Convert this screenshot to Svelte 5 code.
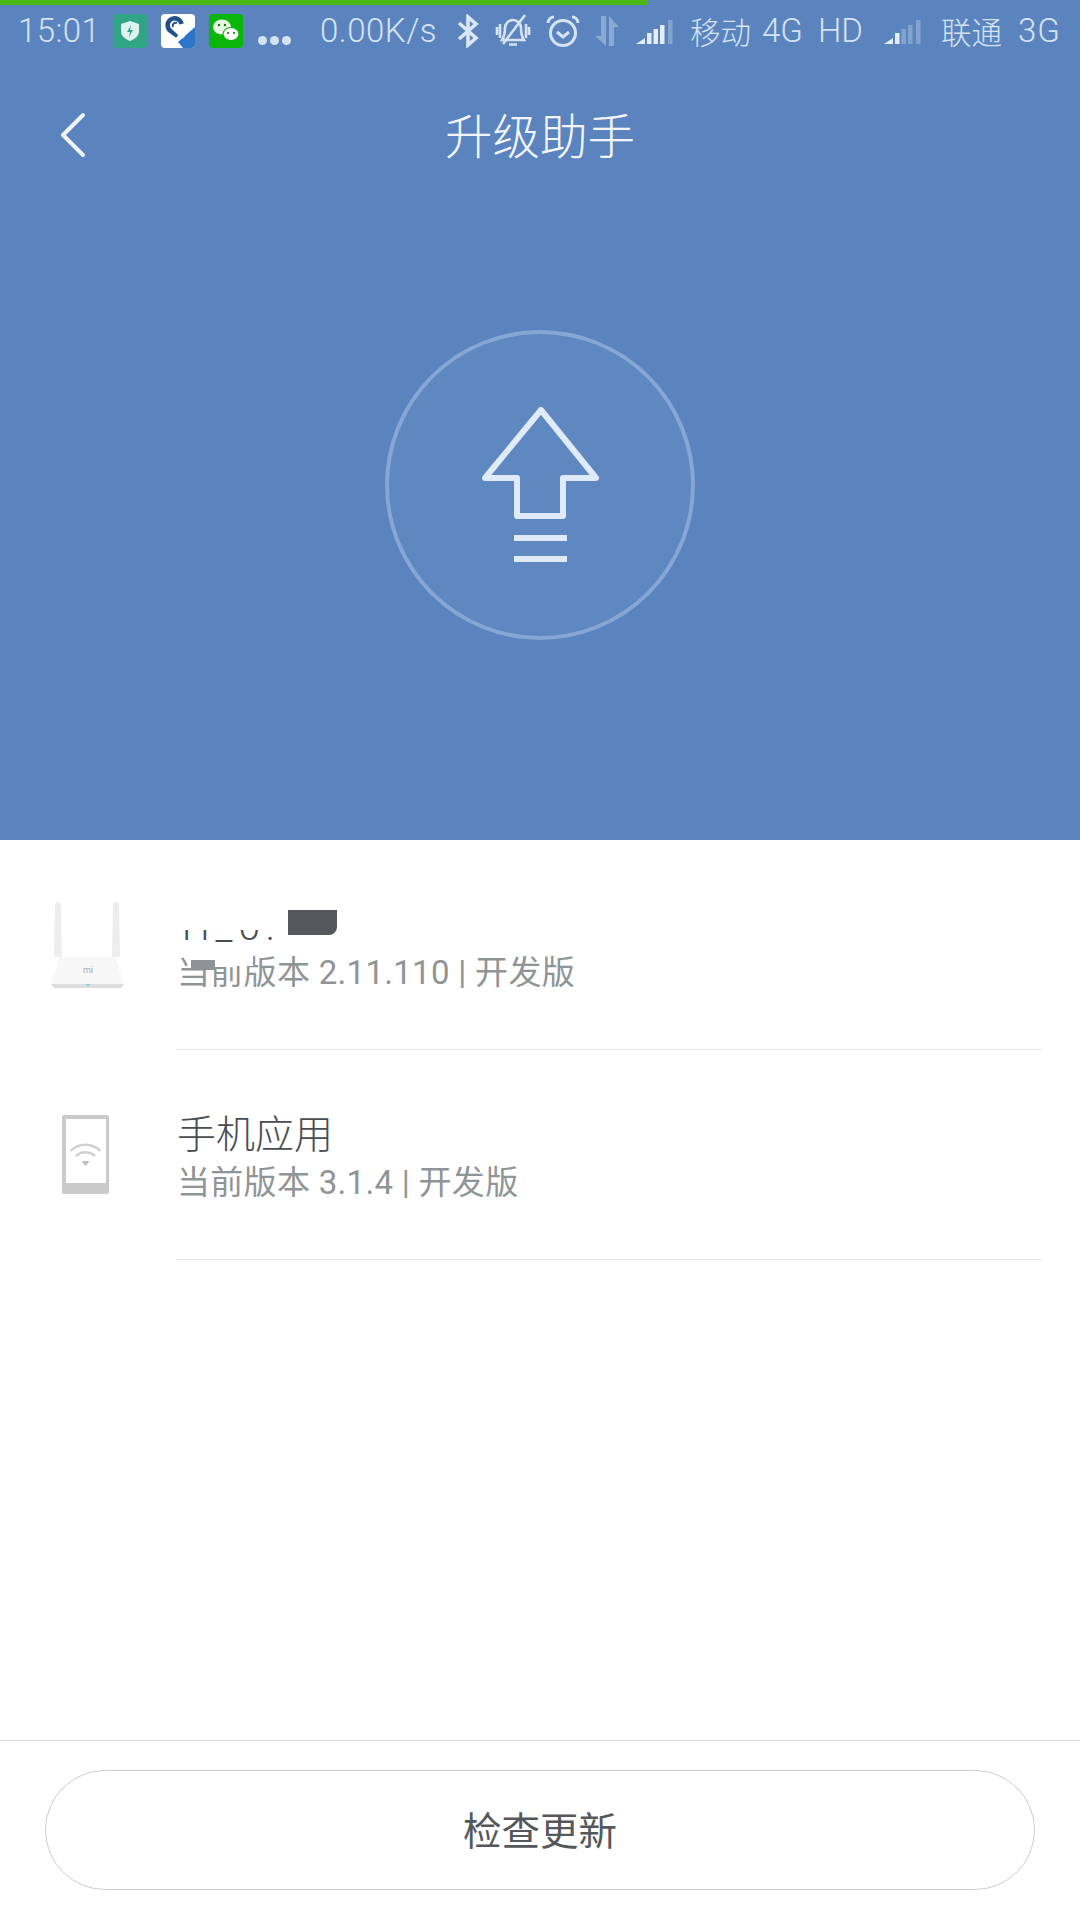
<script>
    const devices = [
        { id: 'router', name: 'H_0:', version: '当前版本 2.11.110 | 开发版' },
        { id: 'phone', name: '手机应用', version: '当前版本 3.1.4 | 开发版' }
    ];
</script>

<div class="page">
    <div class="hero">
        <div class="progress"></div>
        <div class="status">
            <span class="time">15:01</span>
            <svg class="s-app a1" viewBox="0 0 34 34">
                <rect width="34" height="34" rx="4" fill="#2fa585"/>
                <path d="M17 7l9 3v7c0 5-4 8-9 10-5-2-9-5-9-10v-7z" fill="#dff3ee"/>
                <path d="M18 11l-4 7h3l-1 5 4-7h-3z" fill="#2fa585"/>
            </svg>
            <svg class="s-app a2" viewBox="0 0 34 34">
                <rect width="34" height="34" rx="4" fill="#fff"/>
                <path d="M34 13v17a4 4 0 0 1-4 4h-8l-5-6z" fill="#2c75c9"/>
                <path d="M20.5 10a7 7 0 1 0-11 7l7 5" fill="none" stroke="#234f8c" stroke-width="4.5"/>
                <path d="M12 16l3-5 9 11-3 3z" fill="#fff"/>
                <path d="M16 9a3 3 0 0 0-4 4" fill="none" stroke="#234f8c" stroke-width="2"/>
            </svg>
            <svg class="s-app a3" viewBox="0 0 34 34">
                <rect width="34" height="34" rx="4" fill="#0bb60b"/>
                <ellipse cx="13" cy="13" rx="9" ry="7.5" fill="#e8f8e4"/>
                <ellipse cx="22" cy="20" rx="8" ry="6.5" fill="#fff" stroke="#0bb60b" stroke-width="1.2"/>
                <circle cx="10" cy="11" r="1.2" fill="#0a7a0a"/>
                <circle cx="16" cy="11" r="1.2" fill="#0a7a0a"/>
                <circle cx="19" cy="19" r="1.1" fill="#0a7a0a"/>
                <circle cx="25" cy="19" r="1.1" fill="#0a7a0a"/>
            </svg>
            <span class="dots"><i></i><i></i><i></i></span>
            <span class="speed">0.00K/s</span>
            <svg class="s-icon bt" viewBox="0 0 22 34" fill="none" stroke="#dbe7f7" stroke-width="3.6">
                <path d="M2 9l17 15-8 7V3l8 7L2 25"/>
            </svg>
            <svg class="s-icon bell" viewBox="0 0 36 36" fill="none" stroke="#d5e3f5" stroke-width="2.6">
                <path d="M7 27c2-3 3-6 3-12a8 8 0 0 1 16 0c0 6 1 9 3 12z"/>
                <path d="M14 31.500h8M30 2L8 31M2 14v8M5 11v14M34 14v8M31 11v14"/>
            </svg>
            <svg class="s-icon alarm" viewBox="0 0 34 34" fill="none" stroke="#d5e3f5" stroke-width="3">
                <circle cx="17" cy="19" r="12.500"/>
                <path d="M11 18l6 5 6-5M2 9a6 6 0 0 1 6-6M32 9a6 6 0 0 0-6-6"/>
            </svg>
            <svg class="s-icon arrows" viewBox="0 0 28 30" fill="#8aa9d3">
                <path d="M7 0h5v30L1 20h6zM15 0l10 11h-5v19h-5z"/>
            </svg>
            <svg class="s-icon sig1" viewBox="0 0 38 30">
                <path d="M0 28l9-6v6z" fill="#e3edf9"/>
                <path d="M11 17h4.500v11H11zM17.500 13H22v15h-4.500zM24 9h4.500v19H24z" fill="#e3edf9"/>
                <path d="M32 4h4.500v24H32z" fill="#83a3cf"/>
            </svg>
            <span class="carrier c1">移动</span>
            <span class="net n1">4G</span>
            <span class="net n2">HD</span>
            <svg class="s-icon sig2" viewBox="0 0 38 30">
                <path d="M0 28l9-6v6z" fill="#e3edf9"/>
                <path d="M11 17h4.500v11H11z" fill="#e3edf9"/>
                <path d="M17.500 13H22v15h-4.500zM24 9h4.500v19H24zM32 4h4.500v24H32z" fill="#83a3cf"/>
            </svg>
            <span class="carrier c2">联通</span>
            <span class="net n3">3G</span>
        </div>

        <div class="nav">
            <svg class="back" viewBox="0 0 26 46" fill="none" stroke="#eef4fb" stroke-width="4" stroke-linecap="round" stroke-linejoin="round">
                <path d="M23 3L3 23l20 20"/>
            </svg>
            <h1>升级助手</h1>
        </div>

        <svg class="upgrade" viewBox="0 0 310 310">
            <circle cx="155" cy="155" r="153" fill="#5f87c0" stroke="#86a7d6" stroke-width="4"/>
            <path d="M156 80l55 68h-33v38h-46v-38h-32z" fill="none" stroke="#dfeafa" stroke-width="6" stroke-linejoin="round"/>
            <path d="M129 208h53M129 229h53" fill="none" stroke="#dfeafa" stroke-width="6"/>
        </svg>
    </div>

    <div class="list">
        {#each devices as d}
            <div class="row">
                <div class="thumb">
                    {#if d.id === 'router'}
                        <svg class="router" viewBox="0 0 76 88">
                            <path d="M5 3a3 3 0 0 1 6 0l1 52H4z" fill="#eceeee"/>
                            <path d="M63 3a3 3 0 0 1 6 0l1 52h-8z" fill="#eceeee"/>
                            <path d="M10 55h55l9 27H1z" fill="#f7f7f7"/>
                            <path d="M1 82h73l-3 4H4z" fill="#dcdede"/>
                            <text x="38" y="71" text-anchor="middle" font-family="Roboto, sans-serif" font-size="9" fill="#a8a8a8">mi</text>
                            <rect x="36" y="82" width="4" height="1.500" fill="#8cc4ea"/>
                        </svg>
                    {:else}
                        <svg class="phone" viewBox="0 0 47 80">
                            <rect width="47" height="79" rx="2" fill="#cacaca"/>
                            <rect x="4" y="4" width="40" height="64" fill="#fff"/>
                            <path d="M8.500 36a21 21 0 0 1 30 0M14 41a14 14 0 0 1 19 0" fill="none" stroke="#d0d0d0" stroke-width="2.400"/>
                            <path d="M19.500 46h8l-4 5z" fill="#bdbdbd"/>
                        </svg>
                    {/if}
                </div>
                <div class="info">
                    {#if d.id === 'router'}
                        <div class="name clipped"><span>{d.name}</span></div>
                        <div class="mask-dark"></div>
                        <p class="version">{d.version}</p>
                        <div class="mask-white"></div>
                        <div class="mask-grey"></div>
                    {:else}
                        <div class="name">{d.name}</div>
                        <p class="version">{d.version}</p>
                    {/if}
                </div>
            </div>
        {/each}
    </div>

    <div class="footer">
        <button>检查更新</button>
    </div>
</div>

<style>
:global(body) {
    margin: 0;
    background: #fff;
}
.page {
    width: 1080px;
    height: 1920px;
    display: flex;
    flex-direction: column;
    font-family: Roboto, "Noto Sans CJK SC", "Noto Sans", sans-serif;
    overflow: hidden;
}
.hero {
    height: 840px;
    background-color: #5b83bd;
    display: flex;
    flex-direction: column;
    align-items: center;
    flex: none;
}
.progress {
    align-self: flex-start;
    width: 648px;
    height: 5px;
    background-color: #4cb917;
}
.status {
    align-self: stretch;
    height: 51px;
    padding-bottom: 4px;
    display: flex;
    align-items: center;
    padding-left: 18px;
    color: #d5e3f5;
    font-size: 33px;
    font-family: Roboto, "Noto Sans CJK SC", sans-serif;
    font-weight: 300;
    white-space: nowrap;
}
.time { width: 77px; letter-spacing: 0.4px; }
.s-app { width: 34px; height: 34px; flex: none; }
.a1 { margin-left: 18px; }
.a2 { margin-left: 14px; }
.a3 { margin-left: 14px; }
.dots {
    display: flex;
    gap: 3px;
    margin-left: 15px;
    margin-top: 20px;
}
.dots i {
    width: 9px;
    height: 9px;
    border-radius: 50%;
    background-color: #d5e3f5;
}
.speed { width: 120px; margin-left: 29px; letter-spacing: 0.5px; }
.s-icon { flex: none; }
.bt { width: 22px; height: 34px; margin-left: 17px; }
.bell { width: 36px; height: 36px; margin-left: 16px; }
.alarm { width: 34px; height: 34px; margin-left: 15px; }
.arrows { width: 28px; height: 30px; margin-left: 14px; }
.sig1 { width: 38px; height: 30px; margin-left: 14px; }
.sig2 { width: 38px; height: 30px; margin-left: 18px; }
.carrier { font-family: "Noto Sans CJK SC", sans-serif; font-size: 30.500px; font-weight: 300; width: 62px; }
.c1 { margin-left: 16px; }
.c2 { margin-left: 19px; }
.n1 { margin-left: 10px; width: 46px; }
.n2 { margin-left: 10px; width: 48px; }
.n3 { margin-left: 15px; letter-spacing: 1px; }

.nav {
    align-self: stretch;
    height: 150px;
    position: relative;
    display: flex;
    justify-content: center;
    align-items: center;
}
.nav h1 {
    margin: 0 0 2px;
    color: #f2f6fc;
    font-family: "Noto Sans CJK SC", sans-serif;
    font-size: 47.500px;
    font-weight: 300;
    line-height: 1;
}
.back {
    position: absolute;
    left: 60px;
    top: 52px;
    width: 26px;
    height: 46px;
}
.upgrade {
    width: 310px;
    height: 310px;
    margin-top: 120px;
}

.list {
    flex: 1;
    padding-left: 176px;
    padding-right: 39px;
}
.row {
    height: 209px;
    border-bottom: 1px solid #e6e6e6;
    display: flex;
    align-items: center;
    position: relative;
}
.thumb {
    position: absolute;
    left: -176px;
    width: 176px;
    top: 0;
    bottom: 0;
}
.router {
    position: absolute;
    left: 50px;
    top: 62px;
    width: 76px;
    height: 88px;
}
.phone {
    position: absolute;
    left: 62px;
    top: 65px;
    width: 47px;
    height: 80px;
}
.info {
    position: relative;
    padding-left: 1px;
    padding-top: 4px;
}
.name {
    color: #4a4d50;
    font-size: 39px;
    line-height: 48px;
    font-family: "Noto Sans CJK SC", sans-serif;
    font-weight: 300;
}
.clipped {
    height: 48px;
    width: 100px;
    overflow: hidden;
    position: relative;
}
.clipped span {
    position: absolute;
    left: 5px;
    bottom: -2px;
    font-family: Roboto, sans-serif;
    line-height: 1;
    letter-spacing: 6px;
}
.clipped::after {
    content: "";
    position: absolute;
    left: 0;
    right: 0;
    top: 0;
    height: 33px;
    background-color: #fff;
}
.mask-dark {
    position: absolute;
    left: 112px;
    top: 17px;
    width: 49px;
    height: 25px;
    background-color: #54575b;
    border-bottom-right-radius: 8px;
}
.mask-white {
    position: absolute;
    left: 15px;
    top: 61px;
    width: 62px;
    height: 12px;
    background-color: #fff;
}
.mask-grey {
    position: absolute;
    left: 15px;
    top: 67px;
    width: 24px;
    height: 10px;
    background-color: #8e9395;
}
.version {
    margin: 5px 0 0;
    color: #8f9496;
    font-family: Roboto, "Noto Sans CJK SC", sans-serif;
    font-size: 33px;
    letter-spacing: 0.300px;
    line-height: 46px;
    font-weight: 400;
}

.footer {
    height: 180px;
    flex: none;
    border-top: 1px solid #dcdcdc;
    box-sizing: border-box;
    padding: 29px 45px 0 45px;
}
button {
    width: 100%;
    height: 120px;
    background-color: #fff;
    border: 1px solid #cdcdcd;
    border-radius: 60px;
    color: #55585b;
    font-family: "Noto Sans CJK SC", sans-serif;
    font-size: 38.500px;
    font-weight: 400;
    padding: 0 0 4px;
}
</style>
